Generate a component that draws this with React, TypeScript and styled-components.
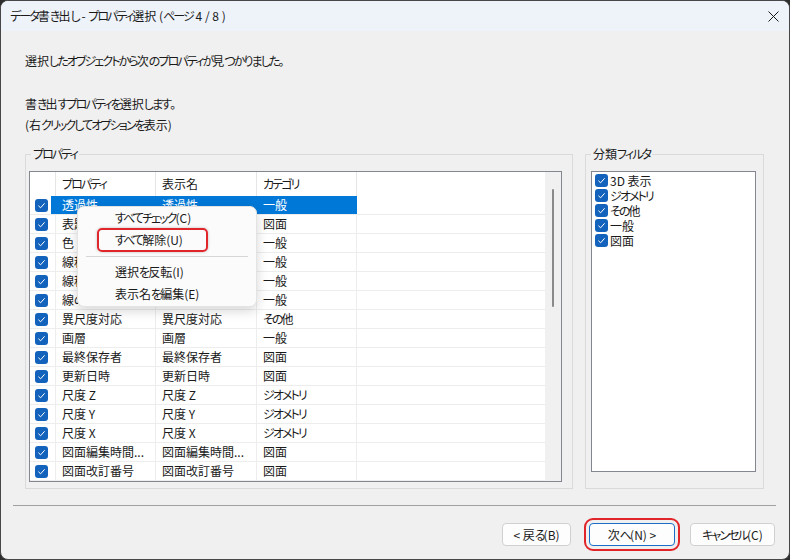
import React from "react";
import styled, { createGlobalStyle } from "styled-components";

const GlobalStyle = createGlobalStyle`
  html, body {
    margin: 0;
    padding: 0;
    background: #2d2d2d;
  }
  body {
    font-family: "Noto Sans CJK JP", "Noto Sans", sans-serif;
    font-size: 12px;
    color: #1a1a1a;
    font-feature-settings: "palt";
  }
  * {
    box-sizing: border-box;
  }
`;

// kana runs are set tighter than kanji, like the system UI face
const Kana = styled.span`
  letter-spacing: -1.9px;
`;

const kanaRun = /([\u3041-\u30ff]+)/;

function Jp({ text }: { text: string }) {
  return (
    <>
      {text.split(kanaRun).map((part, i) =>
        kanaRun.test(part) ? <Kana key={i}>{part}</Kana> : part
      )}
    </>
  );
}

const Window = styled.div`
  width: 790px;
  height: 560px;
  border: 1px solid #474747;
  border-radius: 8px;
  overflow: hidden;
  background: #f0f0f0;
  display: flex;
  flex-direction: column;
`;

const TitleBar = styled.div`
  height: 30px;
  flex: none;
  background: #eef3fa;
  display: flex;
  align-items: center;
  justify-content: space-between;
  padding: 0 10px 0 9px;
`;

const Title = styled.span`
  line-height: 16px;
`;

const CloseButton = styled.button`
  border: 0;
  background: transparent;
  padding: 0;
  width: 12px;
  height: 12px;
  display: flex;
  align-items: center;
  justify-content: center;
`;

const Body = styled.div`
  flex: 1;
  display: flex;
  flex-direction: column;
  padding: 19px 13px 0 12px;
`;

const Intro = styled.div`
  padding-left: 12px;
`;

const Line = styled.p<{ $gap?: number }>`
  margin: ${(p) => p.$gap ?? 0}px 0 0;
  line-height: 21px;
`;

const Groups = styled.div`
  display: flex;
  gap: 12px;
  margin-top: 11px;
  padding-left: 12px;
`;

const Group = styled.fieldset<{ $width: number; $pad: string }>`
  width: ${(p) => p.$width}px;
  margin: 0;
  padding: ${(p) => p.$pad};
  border: 1px solid #dadada;
  min-width: 0;
`;

const Caption = styled.legend<{ $indent: number }>`
  padding: 0 2px;
  margin-left: ${(p) => p.$indent}px;
  line-height: 16px;
`;

const ListView = styled.div`
  position: relative;
  width: 533px;
  height: 311px;
  border: 1px solid #828790;
  background: #fff;
  display: flex;
`;

const Table = styled.div`
  flex: 1;
  display: flex;
  flex-direction: column;
  overflow: hidden;
`;

const columns = "26px 100px 101px 100px 1fr";

const HeaderRow = styled.div`
  display: grid;
  grid-template-columns: ${columns};
  height: 24px;
  flex: none;
`;

const HeaderCell = styled.div<{ $last?: boolean }>`
  border-right: ${(p) => (p.$last ? "0" : "1px solid #e5e5e5")};
  padding: 0 0 2px 6px;
  display: flex;
  align-items: center;
`;

const Row = styled.div`
  display: grid;
  grid-template-columns: ${columns};
  height: 19px;
  flex: none;
  border-bottom: 1px solid #ededed;
`;

const CheckCell = styled.div<{ $selected?: boolean }>`
  border-right: 1px solid ${(p) => (p.$selected ? "#0078d7" : "#ededed")};
  background: ${(p) =>
    p.$selected ? "linear-gradient(to right, transparent 21px, #0078d7 21px)" : "transparent"};
  display: flex;
  align-items: center;
  padding-left: 5px;
`;

const Cell = styled.div<{ $selected?: boolean; $last?: boolean }>`
  border-right: ${(p) => (p.$last ? "0" : `1px solid ${p.$selected ? "#0078d7" : "#ededed"}`)};
  background: ${(p) => (p.$selected && !p.$last ? "#0078d7" : "transparent")};
  color: ${(p) => (p.$selected ? "#fff" : "inherit")};
  padding-left: 6px;
  line-height: 17px;
  white-space: nowrap;
  overflow: hidden;
`;

const ScrollTrack = styled.div`
  width: 16px;
  flex: none;
  background: #f0f0f0;
  display: flex;
  justify-content: center;
  padding-top: 17px;
`;

const ScrollThumb = styled.div`
  width: 2px;
  height: 118px;
  border-radius: 1px;
  background: #8a8a8a;
`;

const Menu = styled.div`
  position: absolute;
  left: 47px;
  top: 34px;
  width: 180px;
  padding: 0 4px 1px;
  background: #fbfbfb;
  border: 1px solid #e3e3e3;
  border-radius: 7px;
  box-shadow: 0 4px 12px rgba(0, 0, 0, 0.16);
`;

const MenuItem = styled.div<{ $marked?: boolean }>`
  position: relative;
  height: 22px;
  line-height: 21px;
  padding-left: 33px;

  ${(p) =>
    p.$marked &&
    `
    &::before {
      content: "";
      position: absolute;
      left: 15px;
      width: 107px;
      top: -1px;
      bottom: -1px;
      border: 2px solid #e0262b;
      border-radius: 5px;
      box-shadow: 0 0 3px rgba(0, 0, 0, 0.25);
    }
  `}
`;

const MenuSeparator = styled.div`
  height: 1px;
  margin: 5px 4px 4px;
  background: #d6d6d6;
`;

const FilterList = styled.div`
  width: 165px;
  height: 301px;
  border: 1px solid #828790;
  background: #fff;
  padding: 1px 3px;
`;

const FilterItem = styled.div`
  height: 15px;
  display: flex;
  align-items: center;
  gap: 2px;
  line-height: 14px;
`;

const Box = styled.span`
  width: 13px;
  height: 13px;
  flex: none;
  border-radius: 3px;
  background: #1363bd;
  display: inline-flex;
  align-items: center;
  justify-content: center;
`;

const Rule = styled.div`
  height: 1px;
  background: #a0a0a0;
  margin-top: 16px;
`;

const Buttons = styled.div`
  display: flex;
  justify-content: flex-end;
  margin-top: 17px;
  padding-right: 1px;
`;

const Button = styled.button<{ $width: number; $gap: number; $default?: boolean; $marked?: boolean }>`
  width: ${(p) => p.$width}px;
  height: 23px;
  margin-left: ${(p) => p.$gap}px;
  border: 1px solid ${(p) => (p.$default ? "#1a6ec7" : "#d0d0d0")};
  border-radius: 4px;
  background: #fdfdfd;
  font-family: inherit;
  font-size: 12px;
  color: #1a1a1a;
  padding: 0;
  font-feature-settings: "palt";
  outline: ${(p) => (p.$marked ? "2px solid #e0262b" : "none")};
  outline-offset: 3px;
`;

function Check() {
  return (
    <Box>
      <svg width="9" height="9" viewBox="0 0 9 9">
        <path d="M1.4 4.7 L3.6 6.8 L7.6 2.3" fill="none" stroke="#fff" strokeWidth="1" />
      </svg>
    </Box>
  );
}

const rows: [string, string, string][] = [
  ["透過性", "透過性", "一般"],
  ["表題", "表題", "図面"],
  ["色", "色", "一般"],
  ["線種", "線種", "一般"],
  ["線種尺度", "線種尺度", "一般"],
  ["線の太さ", "線の太さ", "一般"],
  ["異尺度対応", "異尺度対応", "その他"],
  ["画層", "画層", "一般"],
  ["最終保存者", "最終保存者", "図面"],
  ["更新日時", "更新日時", "図面"],
  ["尺度 Z", "尺度 Z", "ジオメトリ"],
  ["尺度 Y", "尺度 Y", "ジオメトリ"],
  ["尺度 X", "尺度 X", "ジオメトリ"],
  ["図面編集時間...", "図面編集時間...", "図面"],
  ["図面改訂番号", "図面改訂番号", "図面"],
];

const filters = ["3D 表示", "ジオメトリ", "その他", "一般", "図面"];

export default function App() {
  return (
    <>
      <GlobalStyle />
      <Window>
        <TitleBar>
          <Title>
            <Jp text="データ書き出し - プロパティ選択 (ページ 4 / 8 )" />
          </Title>
          <CloseButton>
            <svg width="11" height="11" viewBox="0 0 11 11">
              <path d="M0.5 0.5 L10.5 10.5 M10.5 0.5 L0.5 10.5" stroke="#1a1a1a" strokeWidth="1" />
            </svg>
          </CloseButton>
        </TitleBar>
        <Body>
          <Intro>
            <Line>
              <Jp text="選択したオブジェクトから次のプロパティが見つかりました。" />
            </Line>
            <Line $gap={22}>
              <Jp text="書き出すプロパティを選択します。" />
            </Line>
            <Line>
              <Jp text="(右クリックしてオプションを表示)" />
            </Line>
          </Intro>

          <Groups>
            <Group $width={548} $pad="9px 9px 6px 3px">
              <Caption $indent={2}>
                <Jp text="プロパティ" />
              </Caption>
              <ListView>
                <Table>
                  <HeaderRow>
                    <HeaderCell />
                    <HeaderCell>
                      <Jp text="プロパティ" />
                    </HeaderCell>
                    <HeaderCell>表示名</HeaderCell>
                    <HeaderCell>
                      <Jp text="カテゴリ" />
                    </HeaderCell>
                    <HeaderCell $last />
                  </HeaderRow>
                  {rows.map(([name, label, category], i) => (
                    <Row key={i}>
                      <CheckCell $selected={i === 0}>
                        <Check />
                      </CheckCell>
                      <Cell $selected={i === 0}>
                        <Jp text={name} />
                      </Cell>
                      <Cell $selected={i === 0}>
                        <Jp text={label} />
                      </Cell>
                      <Cell $selected={i === 0}>
                        <Jp text={category} />
                      </Cell>
                      <Cell $last />
                    </Row>
                  ))}
                </Table>
                <ScrollTrack>
                  <ScrollThumb />
                </ScrollTrack>

                <Menu>
                  <MenuItem>
                    <Jp text="すべてチェック(C)" />
                  </MenuItem>
                  <MenuItem $marked>
                    <Jp text="すべて解除(U)" />
                  </MenuItem>
                  <MenuSeparator />
                  <MenuItem>
                    <Jp text="選択を反転(I)" />
                  </MenuItem>
                  <MenuItem>
                    <Jp text="表示名を編集(E)" />
                  </MenuItem>
                </Menu>
              </ListView>
            </Group>

            <Group $width={179} $pad="9px 6px 6px 5px">
              <Caption $indent={0}>
                <Jp text="分類フィルタ" />
              </Caption>
              <FilterList>
                {filters.map((f) => (
                  <FilterItem key={f}>
                    <Check />
                    <span>
                      <Jp text={f} />
                    </span>
                  </FilterItem>
                ))}
              </FilterList>
            </Group>
          </Groups>

          <Rule />

          <Buttons>
            <Button $width={69} $gap={0}>
              <Jp text="< 戻る(B)" />
            </Button>
            <Button $width={86} $gap={18} $default $marked>
              <Jp text="次へ(N) >" />
            </Button>
            <Button $width={85} $gap={15}>
              <Jp text="キャンセル(C)" />
            </Button>
          </Buttons>
        </Body>
      </Window>
    </>
  );
}
